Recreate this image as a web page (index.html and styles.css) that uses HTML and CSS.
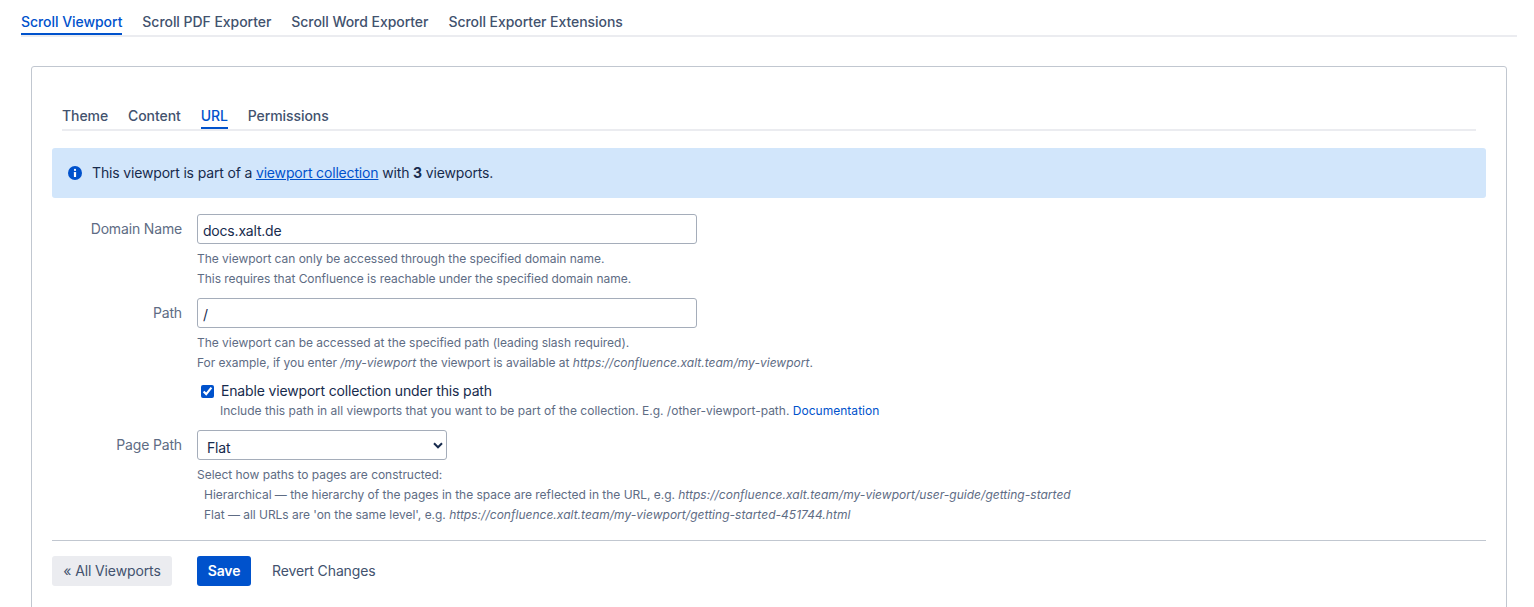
FILE: index.html
```html
<!DOCTYPE html>
<html lang="en">
<head>
<meta charset="utf-8">
<title>Scroll Viewport</title>
<link rel="stylesheet" href="styles.css">
</head>
<body>
<nav class="tabs top-tabs">
  <a class="tab">Scroll Viewport</a>
  <a class="tab">Scroll PDF Exporter</a>
  <a class="tab">Scroll Word Exporter</a>
  <a class="tab">Scroll Exporter Extensions</a>
</nav>
<main class="panel">
  <nav class="tabs inner-tabs">
    <a class="tab">Theme</a>
    <a class="tab">Content</a>
    <a class="tab active">URL</a>
    <a class="tab">Permissions</a>
  </nav>
  <div class="banner">
    <svg class="info" width="14" height="14" viewBox="0 0 14 14"><circle cx="7" cy="7" r="7" fill="#0052cc"/><circle cx="7" cy="3.9" r="1.1" fill="#fff"/><rect x="5.9" y="6" width="2.2" height="5" rx=".6" fill="#fff"/></svg>
    <span>This viewport is part of a <a class="banner-link">viewport collection</a> with <b>3</b> viewports.</span>
  </div>
  <form class="form">
    <div class="row">
      <label class="label">Domain Name</label>
      <div class="field">
        <input class="input" type="text" value="docs.xalt.de">
        <p class="help first">The viewport can only be accessed through the specified domain name.</p>
        <p class="help">This requires that Confluence is reachable under the specified domain name.</p>
      </div>
    </div>
    <div class="row">
      <label class="label">Path</label>
      <div class="field">
        <input class="input" type="text" value="/">
        <p class="help first">The viewport can be accessed at the specified path (leading slash required).</p>
        <p class="help">For example, if you enter <i>/my-viewport</i> the viewport is available at <i>https://confluence.xalt.team/my-viewport</i>.</p>
        <label class="check"><input class="checkbox" type="checkbox" checked><span>Enable viewport collection under this path</span></label>
        <p class="help check-help">Include this path in all viewports that you want to be part of the collection. E.g. /other-viewport-path. <a class="doc-link">Documentation</a></p>
      </div>
    </div>
    <div class="row">
      <label class="label">Page Path</label>
      <div class="field">
        <div class="select-wrap">
          <select class="select"><option>Flat</option><option>Hierarchical</option></select>
          <svg class="chevron" width="10" height="7" viewBox="0 0 10 7"><path d="M1 1.3 5 5.3 9 1.3" fill="none" stroke="#172b4d" stroke-width="2"/></svg>
        </div>
        <p class="help first">Select how paths to pages are constructed:</p>
        <p class="help indent">Hierarchical — the hierarchy of the pages in the space are reflected in the URL, e.g. <i>https://confluence.xalt.team/my-viewport/user-guide/getting-started</i></p>
        <p class="help indent">Flat — all URLs are 'on the same level', e.g. <i>https://confluence.xalt.team/my-viewport/getting-started-451744.html</i></p>
      </div>
    </div>
    <div class="actions">
      <button type="button" class="btn btn-back">« All Viewports</button>
      <button type="button" class="btn btn-save">Save</button>
      <button type="button" class="btn btn-link">Revert Changes</button>
    </div>
  </form>
</main>
</body>
</html>
```
FILE: styles.css
```css
* { box-sizing: border-box; }
html, body { height: 607px; overflow: hidden; }
body {
  margin: 0;
  padding: 0 17px 0 21px;
  background: #fff;
  color: #172b4d;
  font-family: Inter, "Liberation Sans", sans-serif;
  font-size: 14px;
  line-height: 20px;
  letter-spacing: -0.16px;
}
.tabs {
  display: flex;
  gap: 20px;
  border-bottom: 2px solid #ebecf0;
}
.tab {
  display: block;
  height: 100%;
  color: #42526e;
  font-weight: 500;
  letter-spacing: -0.08px;
  margin-bottom: -2px;
  border-bottom: 2px solid transparent;
}
.tab.active { color: #0052cc; border-bottom-color: #0052cc; }
.top-tabs { height: 37px; padding-top: 12px; }
.top-tabs .tab { letter-spacing: -0.05px; }
.top-tabs .tab:first-child { color: #0052cc; border-bottom-color: #0052cc; }
.panel {
  margin: 29px 10px 0;
  height: 560px;
  padding: 0 20px;
  border: 1px solid #c1c7d0;
  border-radius: 3px;
}
.inner-tabs { height: 34px; margin: 30px 10px 0; padding-top: 9px; }
.banner {
  display: flex;
  align-items: center;
  gap: 10px;
  height: 50px;
  margin-top: 17px;
  padding: 0 16px;
  background: #d2e6fb;
  border-radius: 3px;
}
.info { flex: none; }
.banner-link { color: #0052cc; text-decoration: underline; }
.form { display: block; }
.row { display: flex; margin-top: 16px; }
.row + .row { margin-top: 9px; }
.label {
  flex: none;
  width: 130px;
  padding-top: 5px;
  color: #5e6c84;
  text-align: right;
}
.field { margin-left: 15px; flex: 1; min-width: 0; }
.input, .select {
  display: block;
  height: 30px;
  font: inherit;
  letter-spacing: -0.2px;
  color: #172b4d;
  background: #fff;
  border: 1px solid #a5adba;
  border-radius: 3px;
  outline: none;
}
.input { width: 500px; padding: 3px 5px 0; }
.select-wrap { position: relative; width: 250px; }
.select {
  width: 100%;
  padding: 6px 9px 0;
  appearance: none;
}
.chevron { position: absolute; right: 4px; top: 12px; }
.help {
  margin: 0;
  color: #5e6c84;
  font-size: 12px;
  line-height: 20px;
  letter-spacing: -0.03px;
}
.help i { letter-spacing: 0.02px; }
.help.first { margin-top: 5px; }
.indent { padding-left: 7px; }
.check {
  display: flex;
  align-items: center;
  gap: 7px;
  height: 20px;
  margin-top: 8px;
  padding-left: 4px;
}
.checkbox {
  width: 13px;
  height: 13px;
  margin: 0;
  accent-color: #0052cc;
}
.help.check-help { padding-left: 23px; letter-spacing: 0; }
.doc-link { color: #0052cc; letter-spacing: 0.03px; }
.actions {
  display: flex;
  align-items: center;
  margin-top: 15px;
  padding-top: 15px;
  border-top: 1px solid #c1c7d0;
}
.btn {
  height: 30px;
  padding: 0 12px;
  border: 0;
  border-radius: 3px;
  font: inherit;
  letter-spacing: -0.12px;
  color: #42526e;
  background: #ebecf0;
}
.btn-back { width: 120px; padding: 0; margin-right: 25px; }
.btn-save { width: 54px; padding: 0; background: #0052cc; color: #fff; font-weight: 600; margin-right: 9px; }
.btn-link { background: none; color: #42526e; }
```
